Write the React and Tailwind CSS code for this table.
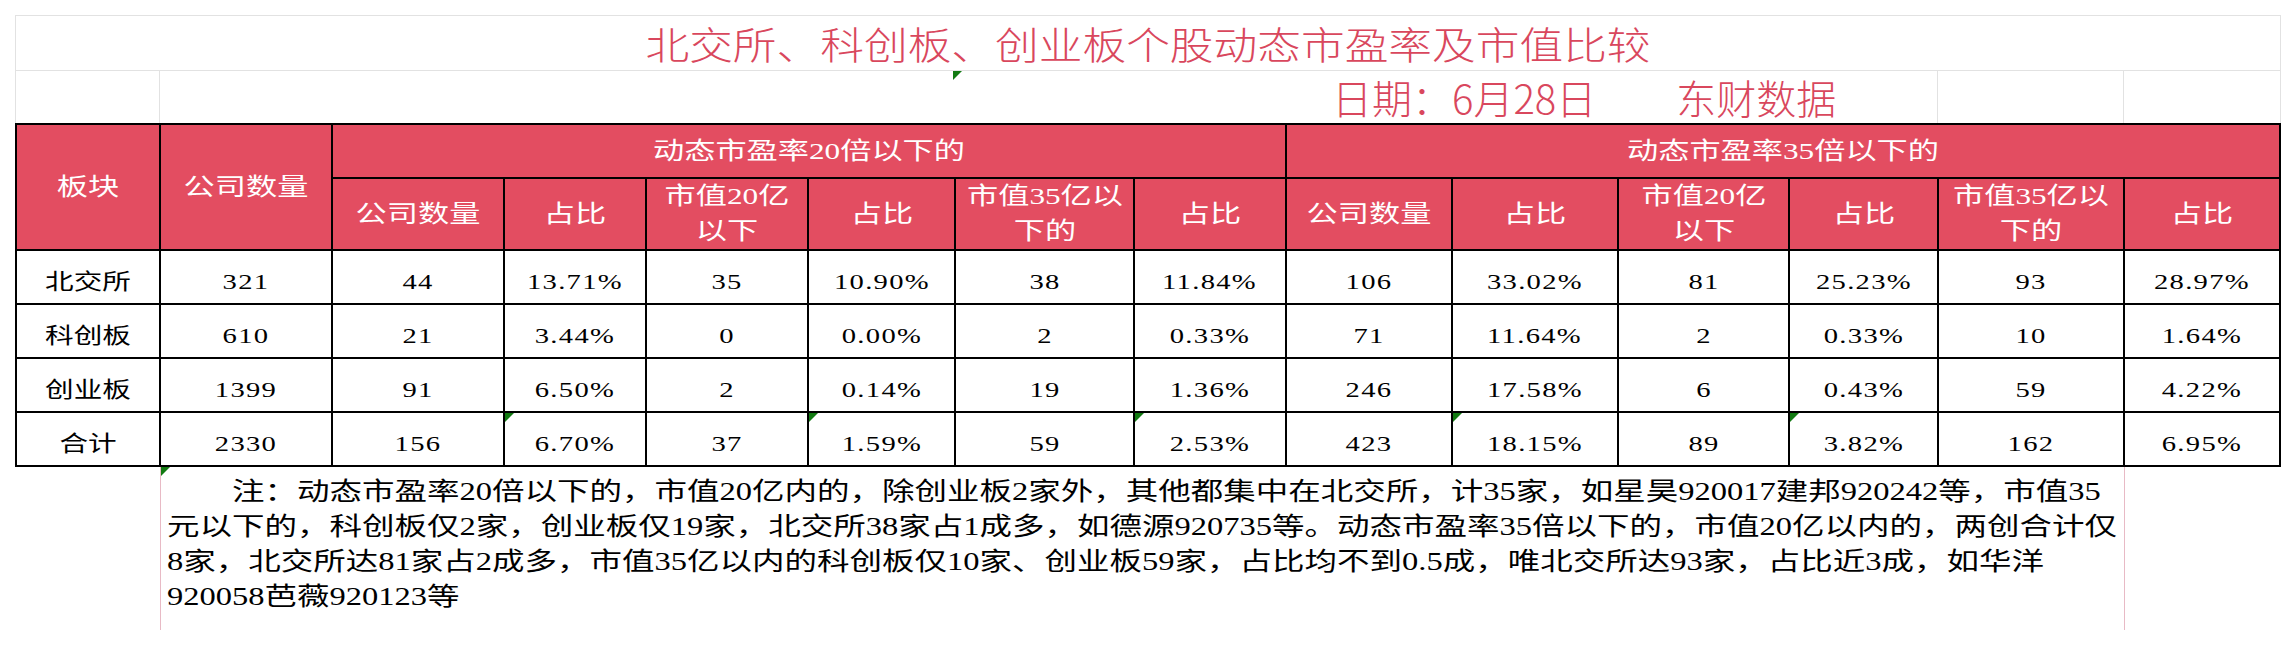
import React from "react";

const subHeads = [["公司数量"], ["占比"], ["市值20亿", "以下"], ["占比"], ["市值35亿以", "下的"], ["占比"]];

const rows = [
    ["北交所", "321", "44", "13.71%", "35", "10.90%", "38", "11.84%", "106", "33.02%", "81", "25.23%", "93", "28.97%"],
    ["科创板", "610", "21", "3.44%", "0", "0.00%", "2", "0.33%", "71", "11.64%", "2", "0.33%", "10", "1.64%"],
    ["创业板", "1399", "91", "6.50%", "2", "0.14%", "19", "1.36%", "246", "17.58%", "6", "0.43%", "59", "4.22%"],
    ["合计", "2330", "156", "6.70%", "37", "1.59%", "59", "2.53%", "423", "18.15%", "89", "3.82%", "162", "6.95%"],
];

// cells in the 合计 row that carry excel's little green marker
const flagged = [3, 5, 7, 9, 11];

const noteLines = [
    "　　注：动态市盈率20倍以下的，市值20亿内的，除创业板2家外，其他都集中在北交所，计35家，如星昊920017建邦920242等，市值35",
    "元以下的，科创板仅2家，创业板仅19家，北交所38家占1成多，如德源920735等。动态市盈率35倍以下的，市值20亿以内的，两创合计仅",
    "8家，北交所达81家占2成多，市值35亿以内的科创板仅10家、创业板59家，占比均不到0.5成，唯北交所达93家，占比近3成，如华洋",
    "920058芭薇920123等",
];

const Tri = () => (
    <span className="absolute left-0 top-0 h-[9px] w-[9px] bg-[#127a12] [clip-path:polygon(0_0,100%_0,0_100%)]" />
);

const Wide = ({ children, className = "" }) => (
    <span className={`inline-block scale-x-[1.3] whitespace-nowrap ${className}`}>{children}</span>
);

const Head = ({ lines, className = "" }) => (
    <div className={`flex items-center justify-center bg-[#e34d61] text-center text-[24px] leading-[35px] text-white ${className}`}>
        <Wide>
            {lines.map((l, i) => (
                <React.Fragment key={i}>
                    {i > 0 && <br />}
                    {l}
                </React.Fragment>
            ))}
        </Wide>
    </div>
);

const App = () => {
    return (
        <div className="h-[646px] w-[2296px] overflow-hidden bg-white pl-[15px] pt-[15px] font-['Liberation_Serif','Noto_Sans_CJK_SC',serif]">
            <div className="w-[2266px]">
                {/* Title */}
                <div className="flex h-[55px] items-center justify-center border-x border-t border-[#e2e2e2] pb-[2px] font-['Noto_Sans_CJK_SC',sans-serif] text-[38px] font-light text-[#d9475d]">
                    <span className="inline-block scale-x-[1.15] whitespace-nowrap">北交所、科创板、创业板个股动态市盈率及市值比较</span>
                </div>

                {/* Date row */}
                <div className="flex h-[53px] border-x border-t border-[#e2e2e2] font-['Noto_Sans_CJK_SC',sans-serif] text-[40px] font-light text-[#d9475d]">
                    <div className="w-[144px] border-r border-[#e2e2e2]" />
                    <div className="relative flex w-[1778px] items-center border-r border-[#e2e2e2] pl-[1172px]">
                        <span className="absolute left-[793px] top-0">
                            <Tri />
                        </span>
                        <span className="whitespace-nowrap leading-none">日期：6月28日　　东财数据</span>
                    </div>
                    <div className="w-[186px] border-r border-[#e2e2e2]" />
                    <div className="w-[155px]" />
                </div>

                {/* Table */}
                <div className="grid grid-cols-[142px_170px_170px_140px_160px_145px_177px_150px_164px_164px_169px_147px_184px_154px] grid-rows-[52px_70px_52px_52px_52px_52px] gap-[2px] bg-black p-[2px]">
                    <Head lines={["板块"]} className="row-span-2" />
                    <Head lines={["公司数量"]} className="row-span-2" />
                    <Head lines={["动态市盈率20倍以下的"]} className="col-span-6" />
                    <Head lines={["动态市盈率35倍以下的"]} className="col-span-6" />
                    {[...subHeads, ...subHeads].map((h, i) => (
                        <Head key={i} lines={h} />
                    ))}

                    {rows.map((row, r) =>
                        row.map((cell, c) => (
                            <div key={`${r}-${c}`} className="relative flex items-center justify-center bg-white pt-[8px] text-[22px] text-black">
                                {r === 3 && flagged.includes(c) && <Tri />}
                                <Wide className={c > 0 ? "tracking-[1px]" : ""}>{cell}</Wide>
                            </div>
                        ))
                    )}
                </div>

                {/* Note */}
                <div className="relative ml-[145px] h-[163px] w-[1965px] border-x border-[#e8bac5] pl-[6px] pt-[7px] text-[25px] leading-[35px] text-black">
                    <Tri />
                    {noteLines.map((line, i) => (
                        <div key={i} className="origin-left scale-x-[1.3] whitespace-nowrap">
                            {line}
                        </div>
                    ))}
                </div>
            </div>
        </div>
    );
};

export default App;
